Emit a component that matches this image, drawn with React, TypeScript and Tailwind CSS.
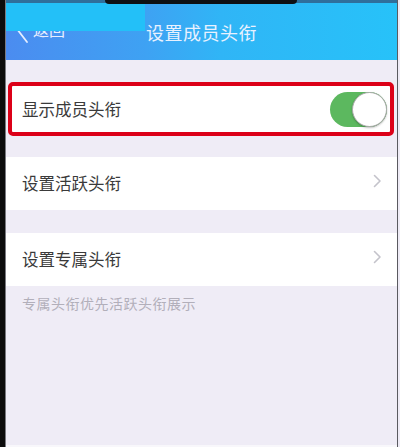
import React from "react";

const cjk = { fontFamily: '"Noto Sans CJK SC", "Noto Sans", sans-serif' };

function Chevron() {
  return (
    <svg width="9" height="14" viewBox="0 0 9 14" fill="none">
      <path d="M1.5 1.5 L7 7 L1.5 12.5" stroke="#c4c3cb" strokeWidth="1.6" strokeLinecap="round" strokeLinejoin="round" />
    </svg>
  );
}

function Toggle() {
  return (
    <div className="relative w-[57px] h-[35px] rounded-full bg-[#5cb85f]">
      <div className="absolute right-0 top-0 w-[35px] h-[35px] rounded-full bg-white border border-[#a9aaa9] shadow-[0_1px_2px_rgba(0,0,0,0.25)]" />
    </div>
  );
}

export default function App() {
  return (
    <div className="w-[400px] h-[447px] flex overflow-hidden bg-[#efecf6]" style={cjk}>
      <div className="w-[5px] bg-[#0c0c0c] shrink-0" />
      <div className="w-[1px] bg-[#7a7a80] shrink-0" />
      <div className="flex-1 flex flex-col">
        {/* navigation bar */}
        <div className="relative h-[60px] shrink-0 flex flex-col bg-[linear-gradient(to_right,#4b8cf0_0%,#3ea2f3_36%,#30b5f6_55%,#27c2f9_100%)]">
          <div className="h-[3px] bg-[#2f6f9c]" />
          <div className="relative flex-1 flex items-center justify-center">
            <div className="absolute left-[9px] top-[11px] flex items-center gap-[4px]">
              <svg width="14" height="30" viewBox="0 0 14 30" fill="none">
                <path d="M12 2 L2 15 L12 28" stroke="#e6eeff" strokeWidth="1.8" strokeLinecap="round" />
              </svg>
              <span className="text-[16px] text-[#e6eeff] leading-none">返回</span>
            </div>
            <div className="absolute left-0 top-0 w-[139px] h-[28px] bg-[#23c0f8]" />
            <span className="relative text-[18px] text-[#e9f1ff] leading-none tracking-[0.5px]">设置成员头衔</span>
          </div>
          <div className="absolute top-0 left-[99px] w-[192px] h-[4px] rounded-b-[6px] bg-[#0d1014]" />
        </div>

        {/* show titles */}
        <div className="mt-[22px] ml-[2px] mr-[3px] h-[54px] rounded-[5px] border-[4px] border-[#dc0018] bg-white flex items-center justify-between pl-[10px] pr-[3px]">
          <span className="text-[16.5px] text-[#3a3a3a] leading-none">显示成员头衔</span>
          <Toggle />
        </div>

        {/* active title */}
        <div className="mt-[21px] h-[53px] bg-white flex items-center justify-between pl-[16px] pr-[15px]">
          <span className="text-[16.5px] text-[#3a3a3a] leading-none">设置活跃头衔</span>
          <div className="-mt-[5px]"><Chevron /></div>
        </div>

        {/* exclusive title */}
        <div className="mt-[23px] h-[53px] bg-white flex items-center justify-between pl-[16px] pr-[15px]">
          <span className="text-[16.5px] text-[#3a3a3a] leading-none">设置专属头衔</span>
          <div className="-mt-[5px]"><Chevron /></div>
        </div>

        <div className="pl-[16px] pt-[10px] text-[14px] text-[#b2afba] leading-none tracking-[0.5px]">
          专属头衔优先活跃头衔展示
        </div>
        <div className="flex-1" />
        <div className="h-[2px] bg-[#f8f7fb]" />
      </div>
      <div className="w-[1px] bg-[#5a5a60] shrink-0" />
      <div className="w-[2px] bg-[#efecf6] shrink-0" />
    </div>
  );
}
